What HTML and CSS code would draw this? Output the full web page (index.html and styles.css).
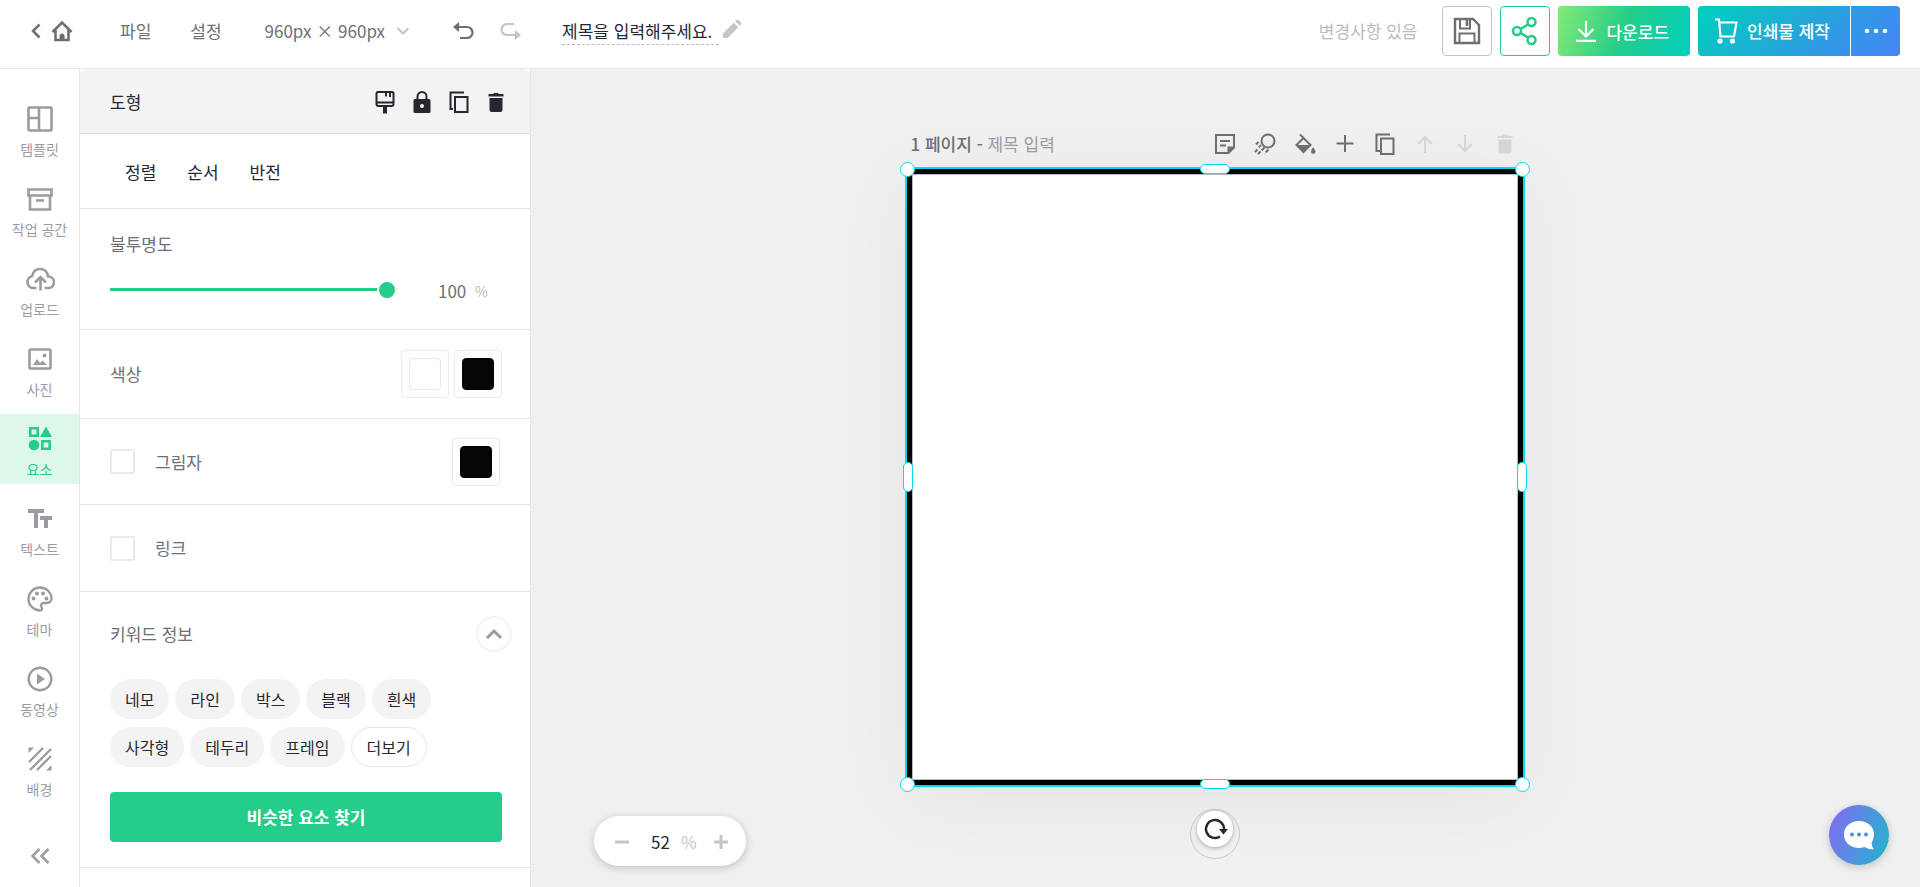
FILE: index.html
```html
<!DOCTYPE html>
<html lang="ko">
<head>
    <meta charset="utf-8">
    <title>제목을 입력해주세요.</title>
    <link rel="stylesheet" href="styles.css">
</head>
<body>
<header class="topbar">
    <a href="#" class="home" aria-label="홈">
        <svg width="10" height="16" viewBox="0 0 10 16"><path d="M8.500 1.500 2 8l6.500 6.500" fill="none" stroke="currentColor" stroke-width="2.500"/></svg>
        <svg width="24" height="24" viewBox="0 0 24 24"><path d="M2.500 13 12 3.500l9.500 9.500M5.500 11v10h13V11" fill="none" stroke="currentColor" stroke-width="2.600"/><path d="M9.500 22v-5a2.500 2.500 0 0 1 5 0v5z" fill="currentColor"/></svg>
    </a>
    <button class="menu">파일</button>
    <button class="menu">설정</button>
    <button class="menu size">960px × 960px
        <svg width="14" height="10" viewBox="0 0 14 10"><path d="m1.500 2 5.500 5.500L12.500 2" fill="none" stroke="#c4c5c9" stroke-width="2"/></svg>
    </button>
    <button class="history" aria-label="실행 취소">
        <svg width="22" height="20" viewBox="0 0 22 20"><path d="M4 6h11a5 5 0 0 1 0 11H8" fill="none" stroke="currentColor" stroke-width="2.200"/><path d="M7 1v10L1 6z" fill="currentColor"/></svg>
    </button>
    <button class="history off" aria-label="다시 실행">
        <svg width="22" height="20" viewBox="0 0 22 20"><path d="M14 3H7a5 5 0 0 0 0 11h11" fill="none" stroke="currentColor" stroke-width="2.200"/><path d="M15 9v10l6-5z" fill="currentColor"/></svg>
    </button>
    <input class="doc-title" type="text" value="제목을 입력해주세요." aria-label="제목">
    <svg class="pencil" width="20" height="20" viewBox="0 0 22 22" fill="#c4c5c9"><path d="M1 21v-5L13 4l5 5L6 21zM14.500 2.500 16 1q1-.8 2 0l3 3q.8 1 0 2l-1.500 1.500z"/></svg>
    <div class="actions">
        <span class="status">변경사항 있음</span>
        <button class="square" aria-label="저장">
            <svg width="28" height="28" viewBox="0 0 28 28" fill="none" stroke="currentColor" stroke-width="2"><path d="M2 2h18l6 6v18H2z" stroke-width="2.400"/><path d="M6.500 26V16.500h15V26M7 2v9.500h10V2"/><path d="M14 3v6" stroke-width="2.600"/></svg>
        </button>
        <button class="square share" aria-label="공유">
            <svg width="30" height="30" viewBox="0 0 30 30" fill="none" stroke="currentColor" stroke-width="2.600"><circle cx="7" cy="15" r="4"/><circle cx="21.500" cy="6" r="4"/><circle cx="21.500" cy="24" r="4"/><path d="m10.500 13 7.500-4.500m-7.500 8.500 7.500 4.500"/></svg>
        </button>
        <button class="download">
            <svg width="20" height="22" viewBox="0 0 20 22" fill="none" stroke="currentColor" stroke-width="2.200"><path d="M10 0v15M2.500 8l7.500 7.500L17.500 8M0 19.800h20"/></svg>
            다운로드
        </button>
        <div class="print">
            <button class="make">
                <svg width="25" height="26" viewBox="0 0 25 26" fill="none" stroke="currentColor" stroke-width="2.200"><path d="M1 1.500h4l1.500 17H20l2.500-14H5"/><circle cx="6" cy="23" r="1.500" fill="currentColor"/><circle cx="18.500" cy="23" r="1.500" fill="currentColor"/></svg>
                인쇄물 제작
            </button>
            <button class="more" aria-label="더보기">
                <svg width="24" height="6" viewBox="0 0 24 6" fill="currentColor"><circle cx="3" cy="3" r="2.300"/><circle cx="12" cy="3" r="2.300"/><circle cx="21" cy="3" r="2.300"/></svg>
            </button>
        </div>
    </div>
</header>

<main class="editor">
    <nav class="rail">
        <a href="#">
            <svg width="30" height="30" viewBox="0 0 30 30" fill="none" stroke="currentColor" stroke-width="2.600"><rect x="3.500" y="3.500" width="23" height="23" rx="1"/><path d="M14 3v24M4 14h10"/></svg>
            템플릿
        </a>
        <a href="#">
            <svg width="30" height="30" viewBox="0 0 30 30" fill="none" stroke="currentColor" stroke-width="2.600"><path d="M3.500 5.500h23v6h-23zM5 11.500v14h20v-14M11 16.500h8"/></svg>
            작업 공간
        </a>
        <a href="#">
            <svg width="30" height="30" viewBox="0 0 30 30" fill="none" stroke="currentColor" stroke-width="2.600"><path d="M11.500 24H8a6 6 0 0 1-1-11.800C8 7.500 11 5 15 5c4.500 0 7.500 3 8 7.500 3.500 0 6 2.500 6 5.700S26.500 24 23.500 24h-4M15.500 26.500v-13M10 18.500l5.500-5.500 5.500 5.500"/></svg>
            업로드
        </a>
        <a href="#">
            <svg width="30" height="30" viewBox="0 0 30 30"><rect x="4.500" y="5.500" width="21" height="19" rx="1" fill="none" stroke="currentColor" stroke-width="2.600"/><path d="m8 21 4-6 3 4 2.500-2.500L22 21z" fill="currentColor"/><circle cx="19.500" cy="11.500" r="2" fill="currentColor"/></svg>
            사진
        </a>
        <a href="#" class="active" aria-current="page">
            <svg width="30" height="30" viewBox="0 0 30 30"><path d="M5.300 4.300h7.400v7.400H5.300zM17.300 17.300h7.400v7.400h-7.400z" fill="none" stroke="currentColor" stroke-width="2.600"/><path d="M21 2.500 27 13H15z" fill="currentColor"/><circle cx="9" cy="21" r="5.300" fill="currentColor"/></svg>
            요소
        </a>
        <a href="#">
            <svg width="30" height="30" viewBox="0 0 30 30" fill="currentColor"><path d="M3 5h16v4h-6v15H9V9H3zM15 12h12v4h-4v8h-4v-8h-4z"/></svg>
            텍스트
        </a>
        <a href="#">
            <svg width="30" height="30" viewBox="0 0 30 30"><path d="M15 3.500C8.500 3.500 3.500 8.500 3.500 15S9 26.500 15 26.500c1.800 0 2.500-1.700 1.500-3.500-1.300-2.300.2-4 2.500-4h3c2.500 0 4.500-2 4.500-4.500 0-6-5-11-11.500-11z" fill="none" stroke="currentColor" stroke-width="2.400"/><g fill="currentColor"><circle cx="8.500" cy="14.500" r="2"/><circle cx="12" cy="9.500" r="2"/><circle cx="18" cy="9.500" r="2"/><circle cx="21.500" cy="14.500" r="2"/></g></svg>
            테마
        </a>
        <a href="#">
            <svg width="30" height="30" viewBox="0 0 30 30"><circle cx="15" cy="15" r="11.300" fill="none" stroke="currentColor" stroke-width="2.400"/><path d="M12 9.500v11l8-5.500z" fill="currentColor"/></svg>
            동영상
        </a>
        <a href="#">
            <svg width="30" height="30" viewBox="0 0 30 30" fill="none" stroke="currentColor" stroke-width="2.400"><path d="M4 18 18 4M5 26 26 5M12 26l14-14"/><path d="M3.500 3.500H9L3.500 9zM26.500 26.500H21l5.500-5.500z" fill="currentColor" stroke="none"/></svg>
            배경
        </a>
        <button class="collapse" aria-label="접기">
            <svg width="20" height="18" viewBox="0 0 20 18" fill="none" stroke="currentColor" stroke-width="2.500"><path d="M9.500 2 2.500 9l7 7M18.500 2l-7 7 7 7"/></svg>
        </button>
    </nav>

    <aside class="panel">
        <div class="panel-head">
            <h2>도형</h2>
            <div class="tools">
                <button aria-label="스타일 복사">
                    <svg width="24" height="24" viewBox="0 0 24 24" fill="none" stroke="currentColor" stroke-width="2"><path d="M5 2h14q1.500 0 1.500 1.500V14q0 2-2 2h-13q-2 0-2-2V3.500Q3.500 2 5 2zM3.500 12.500h17M13 2v4.500M17 2v5"/><path d="M12 16v7.500" stroke-width="4"/></svg>
                </button>
                <button aria-label="잠금">
                    <svg width="24" height="24" viewBox="0 0 24 24"><path d="M7.500 10V6.500a4.500 4.500 0 0 1 9 0V10" fill="none" stroke="currentColor" stroke-width="2"/><path fill-rule="evenodd" d="M5 9h14q1.500 0 1.500 1.500v11Q20.500 23 19 23H5q-1.500 0-1.500-1.500v-11Q3.500 9 5 9zm7 5a2 2 0 1 0 0 4 2 2 0 0 0 0-4z" fill="currentColor"/></svg>
                </button>
                <button aria-label="복제">
                    <svg width="24" height="24" viewBox="0 0 24 24" fill="none" stroke="currentColor" stroke-width="2"><path d="M8 7h12.500v15H8zM17 2.500H3.500V19H6"/></svg>
                </button>
                <button aria-label="삭제">
                    <svg width="24" height="24" viewBox="0 0 24 24" fill="currentColor"><path d="M5.500 8h13v12q0 2-2 2h-9q-2 0-2-2zM4.500 4H9l1-1h4l1 1h4.500v2.500h-15z"/></svg>
                </button>
            </div>
        </div>
        <div class="tabs">
            <button>정렬</button>
            <button>순서</button>
            <button>반전</button>
        </div>
        <section class="opacity">
            <label for="opacity">불투명도</label>
            <div class="slider">
                <input type="range" id="opacity" min="0" max="100" value="100">
                <input type="text" class="amount" value="100" aria-label="불투명도 값">
                <span class="unit">%</span>
            </div>
        </section>
        <section class="row colors">
            <span>색상</span>
            <div class="swatches">
                <button class="swatch" aria-label="흰색"><i></i></button>
                <button class="swatch black" aria-label="검정"><i></i></button>
            </div>
        </section>
        <section class="row shadow">
            <label class="check"><input type="checkbox">그림자</label>
            <button class="swatch black" aria-label="그림자 색상"><i></i></button>
        </section>
        <section class="row link">
            <label class="check"><input type="checkbox">링크</label>
        </section>
        <section class="keywords">
            <div class="keywords-head">
                <span>키워드 정보</span>
                <button class="fold" aria-label="접기">
                    <svg width="18" height="12" viewBox="0 0 18 12"><path d="m2 10 7-7 7 7" fill="none" stroke="currentColor" stroke-width="3"/></svg>
                </button>
            </div>
            <div class="chips">
                <button>네모</button>
                <button>라인</button>
                <button>박스</button>
                <button>블랙</button>
                <button>흰색</button>
                <button>사각형</button>
                <button>테두리</button>
                <button>프레임</button>
                <button class="outline">더보기</button>
            </div>
            <button class="find">비슷한 요소 찾기</button>
        </section>
    </aside>

    <div class="canvas">
        <div class="page">
            <div class="page-bar">
                <span class="page-name">1 페이지 - <em>제목 입력</em></span>
                <div class="page-tools">
                    <button aria-label="메모">
                        <svg width="24" height="24" viewBox="0 0 24 24"><path d="M3 3h18v12.500L15.500 21H3z" fill="none" stroke="currentColor" stroke-width="2"/><path d="M14.500 14.500H22L14.500 22zM7 8h10v2H7zM7 12.500h6v2H7z" fill="currentColor"/></svg>
                    </button>
                    <button aria-label="애니메이션">
                        <svg width="24" height="24" viewBox="0 0 24 24" fill="none" stroke="currentColor" stroke-width="2"><circle cx="15" cy="9" r="6.500"/><path d="m8 13-2 2.500M11.500 15.500 5 22M15.500 17.500l-4 4M4.500 17.500 2 20M5.500 10 3 12.500" stroke-dasharray="4 1.500"/></svg>
                    </button>
                    <button aria-label="배경색">
                        <svg width="24" height="24" viewBox="0 0 24 24"><path d="M7 2.500 17.500 13 10.500 20 3.500 13l7-7" fill="none" stroke="currentColor" stroke-width="2"/><path d="M3 13h15l-7.500 8zM20 15q2.500 3.500 2.500 4.500a2.200 2.200 0 0 1-4.500 0q0-1 2-4.500z" fill="currentColor"/></svg>
                    </button>
                    <button aria-label="페이지 추가">
                        <svg width="24" height="24" viewBox="0 0 24 24" stroke="currentColor" stroke-width="2"><path d="M12 3v17M3.500 11.500h17"/></svg>
                    </button>
                    <button aria-label="페이지 복제">
                        <svg width="24" height="24" viewBox="0 0 24 24" fill="none" stroke="currentColor" stroke-width="2"><path d="M8 6.500h12.500V22H8zM17 2.500H3.500V19H7"/></svg>
                    </button>
                    <button aria-label="위로" disabled>
                        <svg width="24" height="24" viewBox="0 0 24 24" fill="none" stroke="currentColor" stroke-width="2"><path d="M12 21V5M5 12l7-7 7 7"/></svg>
                    </button>
                    <button aria-label="아래로" disabled>
                        <svg width="24" height="24" viewBox="0 0 24 24" fill="none" stroke="currentColor" stroke-width="2"><path d="M12 3v16M5 12l7 7 7-7"/></svg>
                    </button>
                    <button aria-label="페이지 삭제" disabled>
                        <svg width="24" height="24" viewBox="0 0 24 24" fill="currentColor"><path d="M5.500 7.500h13V19q0 2.500-2 2.500h-9q-2 0-2-2.500zM4.500 4H9l1-1.500h4L15 4h4.500v2h-15z"/></svg>
                    </button>
                </div>
            </div>
            <div class="artboard">
                <div class="shape"></div>
                <span class="corner nw"></span>
                <span class="corner ne"></span>
                <span class="corner sw"></span>
                <span class="corner se"></span>
                <span class="edge n"></span>
                <span class="edge s"></span>
                <span class="edge w"></span>
                <span class="edge e"></span>
                <div class="rotate">
                    <button aria-label="회전">
                        <svg width="26" height="26" viewBox="0 0 26 26"><path d="M18 20.500A9 9 0 1 1 22 13" fill="none" stroke="currentColor" stroke-width="2.400"/><path d="M17 13h9l-4.500 5.500z" fill="currentColor"/></svg>
                    </button>
                </div>
            </div>
        </div>
        <div class="zoom">
            <button aria-label="축소"><svg width="14" height="14" viewBox="0 0 14 14" stroke="currentColor" stroke-width="3"><path d="M0 7h14"/></svg></button>
            <input type="text" value="52" aria-label="확대 비율">
            <span>%</span>
            <button aria-label="확대"><svg width="14" height="14" viewBox="0 0 14 14" stroke="currentColor" stroke-width="3"><path d="M0 7h14M7 0v14"/></svg></button>
        </div>
        <button class="chat" aria-label="문의하기">
            <svg width="32" height="32" viewBox="0 0 32 32"><path d="M16 2C7.500 2 1 7.500 1 15.500S7.500 29 16 29q3 0 5.500-1 4 2.500 9.500 2.500-2-2.500-2.500-6.500Q31 20 31 15.500C31 7.500 24.500 2 16 2z" fill="#fff"/><g fill="#508fdc"><circle cx="9" cy="15.500" r="2"/><circle cx="16" cy="15.500" r="2"/><circle cx="23" cy="15.500" r="2"/></g></svg>
        </button>
    </div>
</main>
</body>
</html>
```

FILE: styles.css
```css
* {
    box-sizing: border-box;
}

body {
    margin: 0;
    height: 100vh;
    display: flex;
    flex-direction: column;
    overflow: hidden;
    font-family: "Noto Sans CJK KR", sans-serif;
    font-size: 17px;
    line-height: 24px;
    color: #6e6f75;
}

button,
input {
    font: inherit;
    color: inherit;
    background: none;
    border: 0;
    margin: 0;
    padding: 0;
}

svg {
    display: block;
    flex: none;
}

/* top bar */
.topbar {
    display: flex;
    align-items: center;
    flex: none;
    height: 69px;
    padding: 0 20px 6px 31px;
    background: #fff;
    border-bottom: 1px solid #e6e6e6;
}

.home {
    display: flex;
    align-items: center;
    gap: 9px;
    margin-right: 46px;
    color: #6e6f75;
}

.menu {
    margin-right: 39px;
}

.size {
    display: flex;
    align-items: center;
    gap: 11px;
    margin-left: 4px;
    margin-right: 42px;
}

.history {
    margin-right: 26px;
}

.off {
    color: #c4c5c9;
    margin-right: 40px;
}

.doc-title {
    width: 157px;
    height: 28px;
    color: #26282f;
    border-bottom: 1px dashed #bbb;
}

.pencil {
    margin-left: 3px;
    margin-bottom: 4px;
}

.actions {
    display: flex;
    align-items: center;
    gap: 8px;
    margin-left: auto;
}

.status {
    margin-right: 17px;
    color: #bbb;
}

.square {
    display: flex;
    align-items: center;
    justify-content: center;
    width: 50px;
    height: 50px;
    border: 1px solid #c4c4c8;
    border-radius: 4px;
}

.share {
    border-color: #24cd89;
    color: #24cd89;
}

.download,
.print {
    display: flex;
    height: 50px;
    border-radius: 4px;
    color: #fff;
    font-weight: 500;
}

.download {
    align-items: center;
    gap: 10px;
    padding: 2px 21px 0 18px;
    background: linear-gradient(110deg, #86ea74, #24cd89 50%, #00cfc0);
}

.print {
    background: linear-gradient(135deg, #00d0bc, #2b9ee0 60%, #4785f7);
}

.make {
    display: flex;
    align-items: center;
    gap: 8px;
    padding: 0 20px 0 16px;
}

.more {
    display: flex;
    align-items: center;
    justify-content: center;
    width: 50px;
    border-left: 1px solid #fff;
}

/* left rail */
.editor {
    display: flex;
    flex: 1;
    min-height: 0;
}

.rail {
    display: flex;
    flex-direction: column;
    flex: none;
    gap: 10px;
    width: 80px;
    padding-top: 25px;
    border-right: 1px solid #e6e6e6;
}

.rail a {
    display: flex;
    flex-direction: column;
    align-items: center;
    gap: 5px;
    height: 70px;
    padding-top: 10px;
    color: #9b9ca2;
    font-size: 14px;
    line-height: 20px;
    text-decoration: none;
}

.rail a.active {
    color: #24cd89;
    background: #ddf7eb;
}

.collapse {
    align-self: center;
    margin-top: 33px;
    color: #9b9ca2;
}

/* properties panel */
.panel {
    flex: none;
    width: 451px;
    border-right: 1px solid #e6e6e6;
}

.panel-head {
    display: flex;
    align-items: center;
    justify-content: space-between;
    height: 65px;
    padding: 2px 22px 0 30px;
    background: #f3f3f3;
    border-bottom: 1px solid #dedede;
    border-radius: 6px 6px 0 0;
    color: #26282f;
}

h2 {
    margin: 0;
    font-size: 17px;
    font-weight: 400;
}

.tools {
    display: flex;
    gap: 13px;
}

.tabs {
    display: flex;
    align-items: center;
    gap: 31px;
    height: 75px;
    padding: 2px 0 0 45px;
    border-bottom: 1px solid #e6e6e6;
    color: #26282f;
}

.panel section {
    padding: 0 28px 0 30px;
    border-bottom: 1px solid #e6e6e6;
}

.panel .opacity {
    height: 121px;
    padding-top: 23px;
}

.slider {
    display: flex;
    align-items: center;
    margin-top: 20px;
}

input[type=range] {
    appearance: none;
    width: 287px;
    height: 20px;
    background: linear-gradient(#24cd89, #24cd89) center / 100% 3px no-repeat;
}

input[type=range]::-webkit-slider-thumb {
    appearance: none;
    width: 20px;
    height: 20px;
    border: 2px solid #fff;
    border-radius: 50%;
    background: #24cd89;
}

.amount {
    width: 32px;
    margin-left: 41px;
    padding-top: 3px;
}

.unit {
    margin-left: 5px;
    padding-top: 3px;
    font-size: 14px;
    color: #bbb;
}

.row {
    display: flex;
    align-items: center;
    justify-content: space-between;
}

.colors {
    height: 89px;
}

.panel .shadow {
    height: 86px;
    padding-right: 30px;
}

.link {
    height: 87px;
}

.swatches {
    display: flex;
    gap: 5px;
}

.swatch {
    display: flex;
    align-items: center;
    justify-content: center;
    width: 48px;
    height: 48px;
    border: 1px solid #eaeaea;
    border-radius: 4px;
}

.swatch i {
    width: 32px;
    height: 32px;
    border: 1px solid #e6e6e6;
    border-radius: 4px;
}

.black i {
    background: #050505;
    border-color: #050505;
}

.check {
    display: flex;
    align-items: center;
    gap: 20px;
}

.check input {
    appearance: none;
    width: 25px;
    height: 25px;
    border: 2px solid #eaeaea;
    border-radius: 2px;
}

.keywords {
    height: 276px;
}

.keywords-head {
    display: flex;
    align-items: center;
    justify-content: space-between;
    height: 84px;
    margin-right: -10px;
}

.fold {
    display: flex;
    align-items: center;
    justify-content: center;
    width: 36px;
    height: 36px;
    border: 2px solid #f3f3f3;
    border-radius: 50%;
    color: #9b9ca2;
}

.chips {
    display: flex;
    flex-wrap: wrap;
    gap: 8px 6px;
    width: 340px;
    margin: 3px 0 25px;
}

.chips button {
    height: 40px;
    padding: 0 15px;
    border-radius: 20px;
    background: #f3f3f3;
    color: #26282f;
    font-size: 16px;
}

.chips .outline {
    background: #fff;
    border: 1px solid #e6e6e6;
}

.find {
    display: block;
    width: 100%;
    height: 50px;
    border-radius: 4px;
    background: #24cd89;
    color: #fff;
    font-weight: 700;
}

/* canvas */
.canvas {
    position: relative;
    flex: 1;
    padding: 63px 22px 0 0;
    background: #f0f0f0;
}

.page {
    width: 620px;
    margin: 0 auto;
}

.page-bar {
    display: flex;
    justify-content: space-between;
    padding: 0 8px 11px 6px;
}

.page-name {
    font-weight: 500;
}

.page-name em {
    font-style: normal;
    font-weight: 400;
    color: #9b9ca2;
}

.page-tools {
    display: flex;
    gap: 16px;
}

.page-tools button:disabled {
    color: #d6d7d9;
}

/* zoomed page with the selected shape on it */
.artboard {
    position: relative;
    aspect-ratio: 1;
    border: 2px solid #00dcf5;
    box-shadow: 0 12px 70px rgba(0, 0, 0, .05);
}

.shape {
    height: 100%;
    border: 5px solid #000;
    background: #fff;
    box-shadow: inset 0 0 0 1px #bbb;
}

.corner,
.edge {
    position: absolute;
    border: 1px solid #00dcf5;
    border-radius: 8px;
    background: #fff;
}

.corner {
    width: 15px;
    height: 15px;
}

.nw, .ne { top: -7px; }
.sw, .se { bottom: -7px; }
.nw, .sw { left: -7px; }
.ne, .se { right: -7px; }

.n, .s {
    left: calc(50% - 15px);
    width: 30px;
    height: 10px;
}

.w, .e {
    top: calc(50% - 15px);
    width: 10px;
    height: 30px;
}

.n { top: -5px; }
.s { bottom: -4px; }
.w { left: -4px; }
.e { right: -4px; }

.rotate {
    position: absolute;
    top: calc(100% + 24px);
    left: calc(50% - 25px);
    width: 50px;
    height: 50px;
    padding: 1px 6px;
    border: 1px solid #c8c8c8;
    border-radius: 50%;
}

.rotate button {
    display: flex;
    align-items: center;
    justify-content: center;
    width: 36px;
    height: 36px;
    border-radius: 50%;
    background: #fff;
    box-shadow: 0 1px 4px rgba(0, 0, 0, .3);
    color: #26282f;
}

.zoom {
    position: absolute;
    left: 63px;
    bottom: 21px;
    display: flex;
    align-items: center;
    width: 152px;
    height: 50px;
    padding: 2px 0 0 21px;
    border-radius: 25px;
    background: #fff;
    box-shadow: 0 2px 8px rgba(0, 0, 0, .2);
    color: #c4c5c9;
}

.zoom input {
    width: 22px;
    margin: 0 8px 0 22px;
    color: #26282f;
}

.zoom span {
    margin-right: 17px;
}

.chat {
    position: absolute;
    right: 31px;
    bottom: 22px;
    display: flex;
    align-items: center;
    justify-content: center;
    width: 60px;
    height: 60px;
    border-radius: 50%;
    background: linear-gradient(110deg, #8a68f5, #1cb8c8);
    box-shadow: 0 2px 8px rgba(0, 0, 0, .2);
}
```
